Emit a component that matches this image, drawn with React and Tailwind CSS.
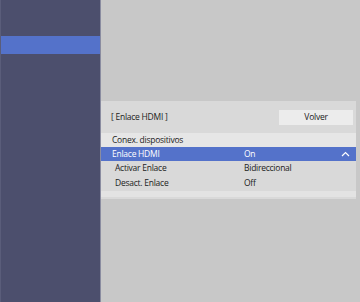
export default function App() {
  const rows = [
    { label: "Activar Enlace", value: "Bidireccional" },
    { label: "Desact. Enlace", value: "Off" },
  ];
  return (
    <div
      className="flex w-[360px] h-[302px] bg-[#c8c8c8] text-[#222] text-[8.5px] tracking-[-0.25px]"
      style={{ fontFamily: "'Open Sans', 'Noto Sans', sans-serif" }}
    >
      {/* Sidebar */}
      <div className="w-[101px] h-full bg-[#4c4f6d] border-l border-[#5a5d7a] border-r border-r-[#8a8ca0] pt-[36px]">
        <div className="h-[18px] bg-[#5472ca]" />
      </div>

      {/* Main */}
      <div className="flex-1 pt-[101px] pr-[4px]">
        <div className="bg-[#d9d9d9]">
          <div className="h-[32px] flex items-center justify-between pl-[10px] pr-[3px]">
            <span>[ Enlace HDMI ]</span>
            <div className="w-[74px] h-[15px] bg-[#ececec] flex items-center justify-center">
              Volver
            </div>
          </div>
          <div className="h-[14px] bg-[#e6e6e6] flex items-center pl-[11px]">
            Conex. dispositivos
          </div>
          <div className="h-[14px] bg-[#5472ca] text-white flex items-center pl-[11px]">
            <span className="w-[132px]">Enlace HDMI</span>
            <span className="flex-1">On</span>
            <svg width="9" height="6" viewBox="0 0 9 6" className="mr-[6px]">
              <path d="M1 5 L4.5 1.5 L8 5" stroke="white" strokeWidth="1.2" fill="none" />
            </svg>
          </div>
          {rows.map((r) => (
            <div key={r.label} className="h-[15px] flex items-center pl-[14px]">
              <span className="w-[129px]">{r.label}</span>
              <span>{r.value}</span>
            </div>
          ))}
          <div className="h-[8px] bg-[#e3e3e3] border-b-[2px] border-[#d9d9d9]" />
        </div>
      </div>
    </div>
  );
}
